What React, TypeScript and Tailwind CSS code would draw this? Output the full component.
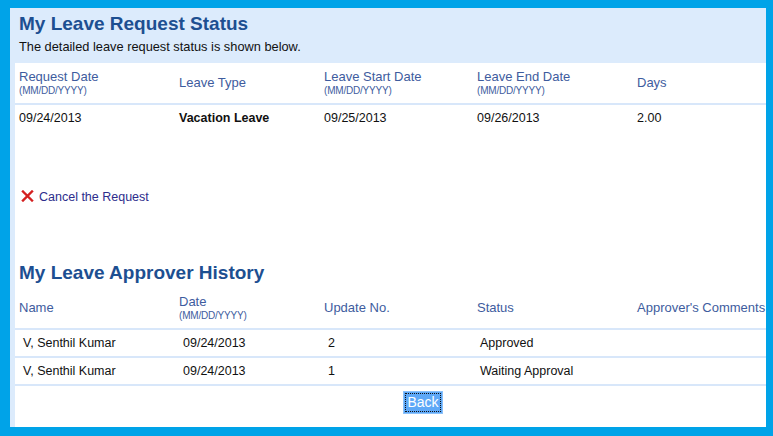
import React from "react";

const cols = "grid grid-cols-[160px_145px_153px_160px_1fr]";
const hdr = "text-[13px] leading-[16px] text-[#3e5c9e] whitespace-nowrap";
const sub = "text-[10px] leading-[12px] tracking-[-0.2px] text-[#3e5c9e] whitespace-nowrap";
const cell = "text-[12.5px] leading-[16px] text-[#111] whitespace-nowrap";

function DateHeader({ label }: { label: string }) {
  return (
    <div className="flex flex-col">
      <span className={hdr}>{label}</span>
      <span className={sub}>(MM/DD/YYYY)</span>
    </div>
  );
}

export default function App() {
  return (
    <div
      className="w-[773px] h-[436px] bg-[#00a3e8] pt-[8px] pl-[10px] pr-[7px] pb-[9px] box-border"
      style={{ fontFamily: '"Liberation Sans", Arial, sans-serif' }}
    >
      <div className="h-full flex flex-col bg-white">
        <div className="h-[55px] bg-[#dcebfc] pl-[9px] pt-[5px] shrink-0">
          <h1 className="text-[19px] font-bold leading-[22px] text-[#1d4f91]">My Leave Request Status</h1>
          <p className="mt-[4px] text-[12.8px] leading-[16px] text-[#111]">
            The detailed leave request status is shown below.
          </p>
        </div>
        <div className="flex-1 border-l-[5px] border-[#dcebfc] bg-white">
          <div className={`${cols} h-[42px] items-center pl-[4px] border-b-2 border-[#d8e7fa]`}>
            <DateHeader label="Request Date" />
            <span className={hdr}>Leave Type</span>
            <DateHeader label="Leave Start Date" />
            <DateHeader label="Leave End Date" />
            <span className={hdr}>Days</span>
          </div>
          <div className={`${cols} h-[26px] items-center pl-[4px]`}>
            <span className={cell}>09/24/2013</span>
            <span className={`${cell} font-bold`}>Vacation Leave</span>
            <span className={cell}>09/25/2013</span>
            <span className={cell}>09/26/2013</span>
            <span className={cell}>2.00</span>
          </div>
          <div className="mt-[58px] h-[16px] flex items-center pl-[6px]">
            <svg width="13" height="12" viewBox="0 0 13 12" className="mb-[3px]">
              <path d="M2 1.5 L11 10.5 M11 1.5 L2 10.5" stroke="#d42020" strokeWidth="2.4" strokeLinecap="square" />
            </svg>
            <a className="ml-[5px] text-[12.5px] leading-[16px] text-[#2d2d8c] cursor-pointer">Cancel the Request</a>
          </div>
          <h2 className="mt-[57px] pl-[4px] text-[19px] font-bold leading-[22px] text-[#1d4f91]">
            My Leave Approver History
          </h2>
          <div className={`${cols} mt-[4px] h-[42px] items-center pl-[4px] border-b-2 border-[#d8e7fa]`}>
            <span className={hdr}>Name</span>
            <DateHeader label="Date" />
            <span className={hdr}>Update No.</span>
            <span className={hdr}>Status</span>
            <span className={`${hdr} text-[12.7px]`}>Approver's Comments</span>
          </div>
          {[
            ["V, Senthil Kumar", "09/24/2013", "2", "Approved"],
            ["V, Senthil Kumar", "09/24/2013", "1", "Waiting Approval"],
          ].map((r, i) => (
            <div key={i} className={`${cols} h-[28px] items-center pl-[8px] border-b-2 border-[#d8e7fa]`}>
              <span className={cell}>{r[0]}</span>
              <span className={cell}>{r[1]}</span>
              <span className={cell}>{r[2]}</span>
              <span className={`${cell} -ml-[1px]`}>{r[3]}</span>
              <span className={cell}></span>
            </div>
          ))}
          <div className="mt-[4px] pl-[388px]">
            <button className="w-[40px] h-[23px] bg-[#5ea8f7] border border-[#8cc2fa] p-[1px] box-border">
              <div className="w-full h-full border border-dotted border-[#111] flex items-center justify-center text-[14px] leading-[14px] text-white">
                Back
              </div>
            </button>
          </div>
        </div>
      </div>
    </div>
  );
}
